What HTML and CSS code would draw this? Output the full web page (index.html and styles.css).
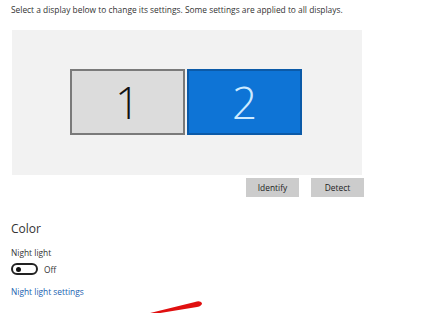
FILE: index.html
```html
<!DOCTYPE html>
<html>
<head>
	<meta charset="UTF-8">
	<title>Display</title>
	<link rel="stylesheet" href="styles.css">
</head>
<body>
	<p class="intro">Select a display below to change its settings. Some settings are applied to all displays.</p>
	<div class="arrange">
		<div class="monitor">1</div>
		<div class="monitor selected">2</div>
	</div>
	<div class="actions">
		<button class="btn">Identify</button>
		<button class="btn">Detect</button>
	</div>
	<h2 class="section">Color</h2>
	<div class="label">Night light</div>
	<div class="toggle-row">
		<span class="toggle"><span class="knob"></span></span>
		<span class="state">Off</span>
	</div>
	<a class="link" href="#">Night light settings</a>
	<svg class="mark" width="70" height="16" viewBox="0 0 70 16">
		<path d="M2 16 L55 3 Q60 1 62 4 Q62 7 57 8 L8 16 Z" fill="#e01010"/>
	</svg>
</body>
</html>
```

FILE: styles.css
```css
body {
	font-family: "Open Sans", "Noto Sans", sans-serif;
	margin: 0;
	padding: 0 0 0 11px;
	width: 432px;
	height: 313px;
	overflow: hidden;
	background: #fff;
	color: #222;
	position: relative;
}
.intro {
	margin: 4px 0 0;
	font-size: 8.4px;
	line-height: 11px;
	color: #333;
}
.arrange {
	margin: 15px 0 0 1px;
	width: 350px;
	height: 145px;
	background: #f2f2f2;
	display: flex;
	justify-content: flex-start;
	align-items: flex-start;
	padding: 39px 0 0 58px;
	box-sizing: border-box;
	gap: 2px;
}
.monitor {
	width: 115px;
	height: 66px;
	box-sizing: border-box;
	border: 2px solid #7a7a7a;
	background: #dcdcdc;
	color: #111;
	font-size: 44px;
	font-weight: 300;
	display: flex;
	align-items: center;
	justify-content: center;
	line-height: 1;
}
.monitor.selected {
	background: #0e74d6;
	border-color: #0b5aa8;
	color: #cdeaff;
}
.actions {
	display: flex;
	gap: 12px;
	margin: 3px 0 0 235px;
}
.btn {
	width: 53px;
	height: 19px;
	border: none;
	background: #cccccc;
	color: #222;
	font-family: inherit;
	font-size: 8.4px;
	padding: 0;
}
.section {
	margin: 24px 0 0;
	font-size: 12px;
	font-weight: 400;
	line-height: 16px;
	color: #333;
}
.label {
	margin-top: 10px;
	font-size: 8.4px;
	line-height: 11px;
	color: #333;
}
.toggle-row {
	display: flex;
	align-items: center;
	gap: 6px;
	margin-top: 5px;
}
.toggle {
	width: 27px;
	height: 12px;
	box-sizing: border-box;
	border: 2px solid #222;
	border-radius: 6px;
	display: flex;
	align-items: center;
	padding-left: 3px;
}
.knob {
	width: 5px;
	height: 5px;
	border-radius: 50%;
	background: #111;
}
.state {
	font-size: 8.4px;
	color: #333;
}
.link {
	display: block;
	margin-top: 11px;
	font-size: 8.4px;
	line-height: 11px;
	color: #1a62b0;
	text-decoration: none;
}
.mark {
	position: absolute;
	left: 140px;
	top: 299px;
}
```
